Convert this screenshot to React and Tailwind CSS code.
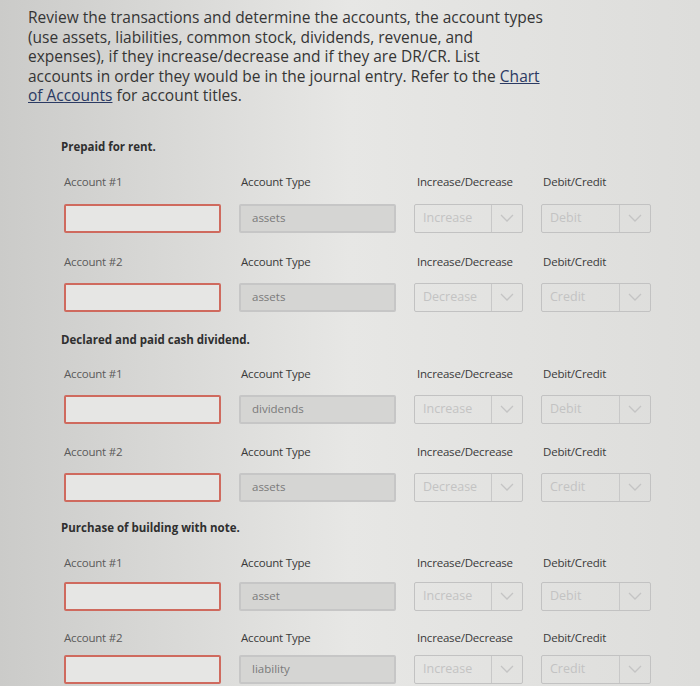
import React from 'react';

// Transactions to classify: each has two account rows.
// Spacing shrinks a little going down, as in the screenshot.
const transactions = [
  {
    title: 'Prepaid for rent.',
    top: 'mt-[33px]',
    rows: [
      { type: 'assets', incdec: 'Increase', drcr: 'Debit', mt: 'mt-[19px]', gap: 'mt-[14px]' },
      { type: 'assets', incdec: 'Decrease', drcr: 'Credit', mt: 'mt-[21px]', gap: 'mt-[13px]' },
    ],
  },
  {
    title: 'Declared and paid cash dividend.',
    top: 'mt-[20px]',
    rows: [
      { type: 'dividends', incdec: 'Increase', drcr: 'Debit', mt: 'mt-[18px]', gap: 'mt-[13px]' },
      { type: 'assets', incdec: 'Decrease', drcr: 'Credit', mt: 'mt-[20px]', gap: 'mt-[13px]' },
    ],
  },
  {
    title: 'Purchase of building with note.',
    top: 'mt-[18px]',
    rows: [
      { type: 'asset', incdec: 'Increase', drcr: 'Debit', mt: 'mt-[19px]', gap: 'mt-[11px]' },
      { type: 'liability', incdec: 'Increase', drcr: 'Credit', mt: 'mt-[19px]', gap: 'mt-[9px]' },
    ],
  },
];

const Chevron = () => (
  <svg width="16" height="12" viewBox="0 0 16 12" fill="none">
    <polyline points="2,3 8,9 14,3" stroke="#c4c4c4" strokeWidth="1.3" />
  </svg>
);

const SelectBox = ({ value }) => (
  <div className="flex h-[29px] border border-[#c2c2c2] rounded-[2px]">
    <div className="flex-1 flex items-center pl-[8px] text-[12.5px] text-[#c3c3c3]">{value}</div>
    <div className="w-[31px] border-l border-[#c8c8c8] flex items-center justify-center">
      <Chevron />
    </div>
  </div>
);

const AccountRow = ({ index, row }) => (
  <div className={row.mt}>
    {/* etiquetas */}
    <div className="grid grid-cols-[157px_157px_109px_110px] gap-x-[18px] text-[11.5px] leading-[16px] -tracking-[0.2px]">
      <span className="text-[#5a5a5a]">Account #{index}</span>
      <span className="text-[#3a3a3a] pl-[2px]">Account Type</span>
      <span className="text-[#3a3a3a] pl-[3px]">Increase/Decrease</span>
      <span className="text-[#3a3a3a] pl-[2px]">Debit/Credit</span>
    </div>
    {/* campos */}
    <div className={`grid grid-cols-[157px_157px_109px_110px] gap-x-[18px] ${row.gap}`}>
      <div className="h-[29px] border-2 border-[#cf6a5e] rounded-[2px] bg-[#e6e6e4]" />
      <div className="h-[29px] border-2 border-[#c6c6c6] rounded-[2px] bg-[#d5d5d3] flex items-center pl-[11px] text-[11.5px] text-[#7a7a7a]">
        {row.type}
      </div>
      <SelectBox value={row.incdec} />
      <SelectBox value={row.drcr} />
    </div>
  </div>
);

export default function App() {
  return (
    <div
      className="w-[700px] h-[686px] overflow-hidden bg-gradient-to-r from-[#cbcbc9] via-[#e7e7e5] to-[#dddddb] text-[#333]"
      style={{ fontFamily: '"Open Sans", "Liberation Sans", sans-serif' }}
    >
      <div className="pl-[10px] pt-[8px]">
        <p className="pl-[18px] text-[15.5px] leading-[19.5px] text-[#353535]">
          Review the transactions and determine the accounts, the account types
          <br />
          (use assets, liabilities, common stock, dividends, revenue, and
          <br />
          expenses), if they increase/decrease and if they are DR/CR. List
          <br />
          accounts in order they would be in the journal entry. Refer to the{' '}
          <span className="underline text-[#2b3a63]">Chart</span>
          <br />
          <span className="underline text-[#2b3a63]">of Accounts</span> for account titles.
        </p>

        <div className="pl-[54px]">
          {transactions.map((t) => (
            <div key={t.title} className={t.top}>
              <div className="text-[11.5px] leading-[16px] font-bold text-[#2f2f2f] -ml-[3px]">{t.title}</div>
              {t.rows.map((row, ri) => (
                <AccountRow key={ri} index={ri + 1} row={row} />
              ))}
            </div>
          ))}
        </div>
      </div>
    </div>
  );
}
